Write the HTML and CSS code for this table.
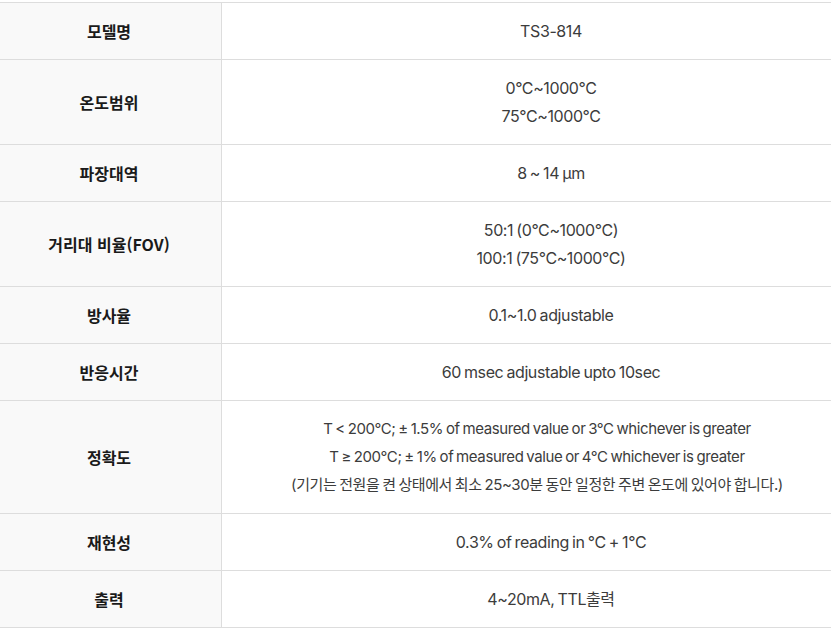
FILE: index.html
```html
<!DOCTYPE html>
<html lang="ko">
<head>
<meta charset="utf-8">
<link rel="stylesheet" href="styles.css">
</head>
<body>
<table class="spec">
  <tbody>
    <tr><th>모델명</th><td>TS3-814</td></tr>
    <tr><th>온도범위</th><td>0°C~1000°C<br>75°C~1000°C</td></tr>
    <tr><th>파장대역</th><td>8 ~ 14 µm</td></tr>
    <tr><th>거리대 비율(FOV)</th><td>50:1 (0°C~1000°C)<br>100:1 (75°C~1000°C)</td></tr>
    <tr><th>방사율</th><td>0.1~1.0 adjustable</td></tr>
    <tr><th>반응시간</th><td>60 msec adjustable upto 10sec</td></tr>
    <tr><th>정확도</th><td><div class="note">T &lt; 200°C; ± 1.5% of measured value or 3°C whichever is greater<br>T ≥ 200°C; ± 1% of measured value or 4°C whichever is greater<br>(기기는 전원을 켠 상태에서 최소 25~30분 동안 일정한 주변 온도에 있어야 합니다.)</div></td></tr>
    <tr><th>재현성</th><td>0.3% of reading in °C + 1°C</td></tr>
    <tr><th>출력</th><td>4~20mA, TTL출력</td></tr>
  </tbody>
</table>
</body>
</html>
```
FILE: styles.css
```css
html, body {
  margin: 0;
  padding: 0;
  background: #fff;
}
body {
  padding-top: 2px;
  font-family: Inter, "Noto Sans CJK KR", sans-serif;
  font-size: 16px;
}
.spec {
  width: 831px;
  border-collapse: collapse;
  border-top: 1px solid #dddddd;
}
.spec th, .spec td {
  border-bottom: 1px solid #dddddd;
  padding: 14px 0;
  line-height: 28px;
  text-align: center;
  vertical-align: middle;
}
.spec th {
  width: 218px;
  padding-right: 3px;
  background: #f9f9f9;
  border-right: 1px solid #dddddd;
  color: #1a1a1a;
  font-weight: 700;
  font-family: "Noto Sans CJK KR", sans-serif;
}
.spec td {
  padding-left: 49px;
  color: #3c3c3c;
  font-weight: 400;
  letter-spacing: -0.4px;
  word-spacing: -1px;
}
.note {
  font-size: 15px;
  margin-right: 28px;
}
```
